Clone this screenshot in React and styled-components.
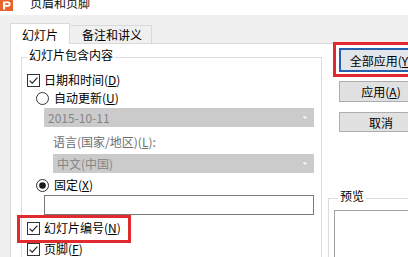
import styled, { createGlobalStyle } from 'styled-components';

const GlobalStyle = createGlobalStyle`
  html, body {
    margin: 0;
    padding: 0;
    background: #f0f0f0;
  }
  body {
    font-family: "Noto Sans CJK SC", "Noto Sans", sans-serif;
    font-size: 12px;
    color: #000;
  }
`;

function AppIcon() {
  return (
    <svg width="13" height="11" viewBox="0 0 13 11" style={{ display: 'block', flexShrink: 0 }}>
      <rect x="0" y="0" width="13" height="11" fill="#e8622b" />
      <path d="M3 1.5h5a2.6 2.6 0 0 1 0 5.2H5.2V9.5H3z M5.2 3.3v1.8h2.5a0.9 0.9 0 0 0 0-1.8z" fill="#fff" fillRule="evenodd" />
    </svg>
  );
}

function CheckBox() {
  return (
    <svg width="13" height="13" viewBox="0 0 13 13" style={{ display: 'block', flexShrink: 0 }}>
      <rect x="0.5" y="0.5" width="12" height="12" fill="#fff" stroke="#333" />
      <path d="M2.6 6.6l2.6 2.6 5.2-5.6" fill="none" stroke="#222" strokeWidth="1.2" />
    </svg>
  );
}

function Radio({ checked }) {
  return (
    <svg width="13" height="13" viewBox="0 0 13 13" style={{ display: 'block', flexShrink: 0 }}>
      <circle cx="6.5" cy="6.5" r="6" fill="#fff" stroke="#333" />
      {checked && <circle cx="6.5" cy="6.5" r="3.3" fill="#1a1a1a" />}
    </svg>
  );
}

function Arrow() {
  return (
    <svg width="8" height="6" viewBox="0 0 8 6" style={{ display: 'block' }}>
      <path d="M0.5 0.8h7L4 5.2z" fill="#efefef" stroke="#b5b5b5" strokeWidth="0.6" />
    </svg>
  );
}

export default function App() {
  return (
    <Window>
      <GlobalStyle />
      <TitleBar>
        <AppIcon />
        <TitleText>页眉和页脚</TitleText>
      </TitleBar>
      <Body>
        <TabStrip>
          <Tab $active>幻灯片</Tab>
          <Tab>备注和讲义</Tab>
        </TabStrip>
        <Panel>
          <GroupBox>
            <Legend>幻灯片包含内容</Legend>
            <Row>
              <CheckBox />
              <span>日期和时间(<u>D</u>)</span>
            </Row>
            <Row $indent={9} $top={2} $gap={5}>
              <Radio />
              <span>自动更新(<u>U</u>)</span>
            </Row>
            <Select $indent={17} $top={2} $width={270}>
              <span>2015-10-11</span>
              <Arrow />
            </Select>
            <MutedLabel>语言(国家/地区)(<u>L</u>):</MutedLabel>
            <Select $indent={26} $top={4} $width={261}>
              <span>中文(中国)</span>
              <Arrow />
            </Select>
            <Row $indent={9} $top={4} $gap={5}>
              <Radio checked />
              <span>固定(<u>X</u>)</span>
            </Row>
            <TextInput />
            <Highlight>
              <Row>
                <CheckBox />
                <span>幻灯片编号(<u>N</u>)</span>
              </Row>
            </Highlight>
            <Row>
              <CheckBox />
              <span>页脚(<u>F</u>)</span>
            </Row>
          </GroupBox>
          <Side>
            <RedFrame>
              <Button $primary>全部应用(<u>Y</u>)</Button>
            </RedFrame>
            <Button $left={11} $top={4} $height={21}>应用(<u>A</u>)</Button>
            <Button $left={11} $top={10} $height={20}>取消</Button>
            <PreviewGroup>
              <PreviewLegend>预览</PreviewLegend>
              <PreviewBox />
            </PreviewGroup>
          </Side>
        </Panel>
      </Body>
    </Window>
  );
}

const Window = styled.div`
  width: 408px;
  height: 257px;
  overflow: hidden;
  background: #f0f0f0;
`;

const TitleBar = styled.div`
  height: 15px;
  background: #fff;
  display: flex;
  align-items: flex-start;
  overflow: hidden;
`;

const TitleText = styled.span`
  margin: -4px 0 0 17px;
  line-height: 14px;
  font-size: 12px;
  color: #111;
`;

const Body = styled.div`
  padding: 8px 0 0 10px;
`;

const TabStrip = styled.div`
  display: flex;
  align-items: flex-end;
  height: 20px;
`;

const Tab = styled.div`
  box-sizing: border-box;
  display: flex;
  align-items: center;
  border: 1px solid #d9d9d9;
  border-bottom: none;
  ${({ $active }) =>
    $active
      ? `
    position: relative;
    z-index: 1;
    width: 60px;
    height: 21px;
    margin-bottom: -1px;
    padding-left: 11px;
    background: #fff;
  `
      : `
    width: 82px;
    height: 18px;
    border-left: none;
    padding-left: 12px;
    background: #f0f0f0;
  `}
`;

const Panel = styled.div`
  display: flex;
  align-items: flex-start;
  height: 214px;
  padding-left: 10px;
  background: #fff;
  border-top: 1px solid #d9d9d9;
  border-left: 1px solid #d9d9d9;
`;

const GroupBox = styled.fieldset`
  box-sizing: border-box;
  flex-shrink: 0;
  width: 301px;
  height: 260px;
  min-width: 0;
  margin: 4px 0 0 0;
  padding: 6px 0 0 5px;
  border: 1px solid #dcdcdc;
`;

const Legend = styled.legend`
  padding: 0 2px 4px;
  line-height: 14px;
`;

const Row = styled.div`
  display: flex;
  align-items: center;
  gap: ${({ $gap }) => $gap ?? 4}px;
  height: 16px;
  line-height: 16px;
  margin-left: ${({ $indent }) => $indent ?? 0}px;
  margin-top: ${({ $top }) => $top ?? 0}px;
  white-space: nowrap;
`;

const Select = styled.div`
  box-sizing: border-box;
  display: flex;
  align-items: center;
  justify-content: space-between;
  width: ${({ $width }) => $width}px;
  height: 19px;
  margin-left: ${({ $indent }) => $indent}px;
  margin-top: ${({ $top }) => $top}px;
  padding: 0 5px 0 4px;
  background: #cbcbcb;
  color: #858585;
  line-height: 19px;
`;

const MutedLabel = styled.div`
  height: 16px;
  line-height: 16px;
  margin: 7px 0 0 26px;
  color: #6e6e6e;
`;

const TextInput = styled.div`
  box-sizing: border-box;
  width: 270px;
  height: 20px;
  margin: 2px 0 0 17px;
  background: #fff;
  border: 1px solid #7a7a7a;
`;

const Highlight = styled.div`
  width: fit-content;
  margin: 0 0 -2px -10px;
  padding: 2px 7px 4px;
  border: 3px solid #e12a2d;
`;

const Side = styled.div`
  display: flex;
  flex-direction: column;
  align-items: flex-start;
  flex-shrink: 0;
  margin: -2px 0 0 6px;
`;

const RedFrame = styled.div`
  margin-left: 5px;
  padding: 3px 0 2px 3px;
  border: 3px solid #e12a2d;
  border-right: none;
  width: 100px;
`;

const Button = styled.div`
  box-sizing: border-box;
  flex-shrink: 0;
  display: flex;
  align-items: center;
  justify-content: center;
  width: 84px;
  height: ${({ $height }) => $height ?? 24}px;
  margin-left: ${({ $left }) => $left ?? 0}px;
  margin-top: ${({ $top }) => $top ?? 0}px;
  background: ${({ $primary }) => ($primary ? '#e2e6eb' : '#e1e1e1')};
  border: ${({ $primary }) => ($primary ? '2px solid #2561ad' : '1px solid #adadad')};
  white-space: nowrap;
`;

const PreviewGroup = styled.fieldset`
  box-sizing: border-box;
  width: 110px;
  height: 120px;
  min-width: 0;
  margin: 57px 0 0 0;
  padding: 0;
  border: 1px solid #dcdcdc;
`;

const PreviewLegend = styled.legend`
  margin-left: 9px;
  padding: 0 2px 4px;
  line-height: 14px;
`;

const PreviewBox = styled.div`
  height: 80px;
  margin: 3px 0 0 5px;
  background: #fff;
  border: 1px solid #a0a0a0;
`;
